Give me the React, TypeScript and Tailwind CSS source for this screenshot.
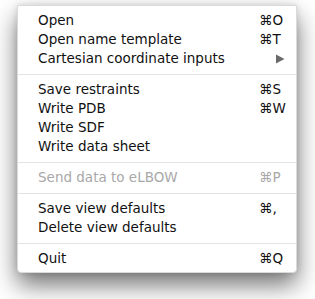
import React from "react";

type Item =
  | { kind: "item"; label: string; key?: string; submenu?: boolean; disabled?: boolean }
  | { kind: "sep" };

const items: Item[] = [
  { kind: "item", label: "Open", key: "⌘O" },
  { kind: "item", label: "Open name template", key: "⌘T" },
  { kind: "item", label: "Cartesian coordinate inputs", submenu: true },
  { kind: "sep" },
  { kind: "item", label: "Save restraints", key: "⌘S" },
  { kind: "item", label: "Write PDB", key: "⌘W" },
  { kind: "item", label: "Write SDF" },
  { kind: "item", label: "Write data sheet" },
  { kind: "sep" },
  { kind: "item", label: "Send data to eLBOW", key: "⌘P", disabled: true },
  { kind: "sep" },
  { kind: "item", label: "Save view defaults", key: "⌘," },
  { kind: "item", label: "Delete view defaults" },
  { kind: "sep" },
  { kind: "item", label: "Quit", key: "⌘Q" },
];

export default function App() {
  return (
    <div className="w-[315px] h-[299px] bg-white pt-[5px] pl-[17px] overflow-hidden">
      <div
        className="w-[280px] bg-white rounded-b-[4px] pt-[5px] pb-[4px] border border-[#dadada] shadow-[0_12px_24px_rgba(0,0,0,0.55),0_0_6px_rgba(0,0,0,0.12)]"
        style={{ fontFamily: '"DejaVu Sans", "Liberation Sans", sans-serif' }}
      >
        {items.map((item, i) => {
          if (item.kind === "sep") {
            return (
              <div key={i} className="h-[12px] flex items-center">
                <div className="h-px w-full bg-[#e3e3e3]" />
              </div>
            );
          }
          return (
            <div
              key={i}
              className={`h-[19px] flex items-center text-[13.5px] leading-[19px] ${
                item.disabled ? "text-[#a8a8a8]" : "text-[#111]"
              }`}
            >
              <span className="pl-[20px] flex-1 whitespace-nowrap">{item.label}</span>
              <span className="w-[37px] whitespace-nowrap">
                {item.submenu ? (
                  <svg width="10" height="10" viewBox="0 0 10 10" className="ml-[16px]">
                    <path d="M1 0.5 L9.5 5 L1 9.5 Z" fill="#6a6a6a" />
                  </svg>
                ) : (
                  item.key
                )}
              </span>
            </div>
          );
        })}
      </div>
    </div>
  );
}
